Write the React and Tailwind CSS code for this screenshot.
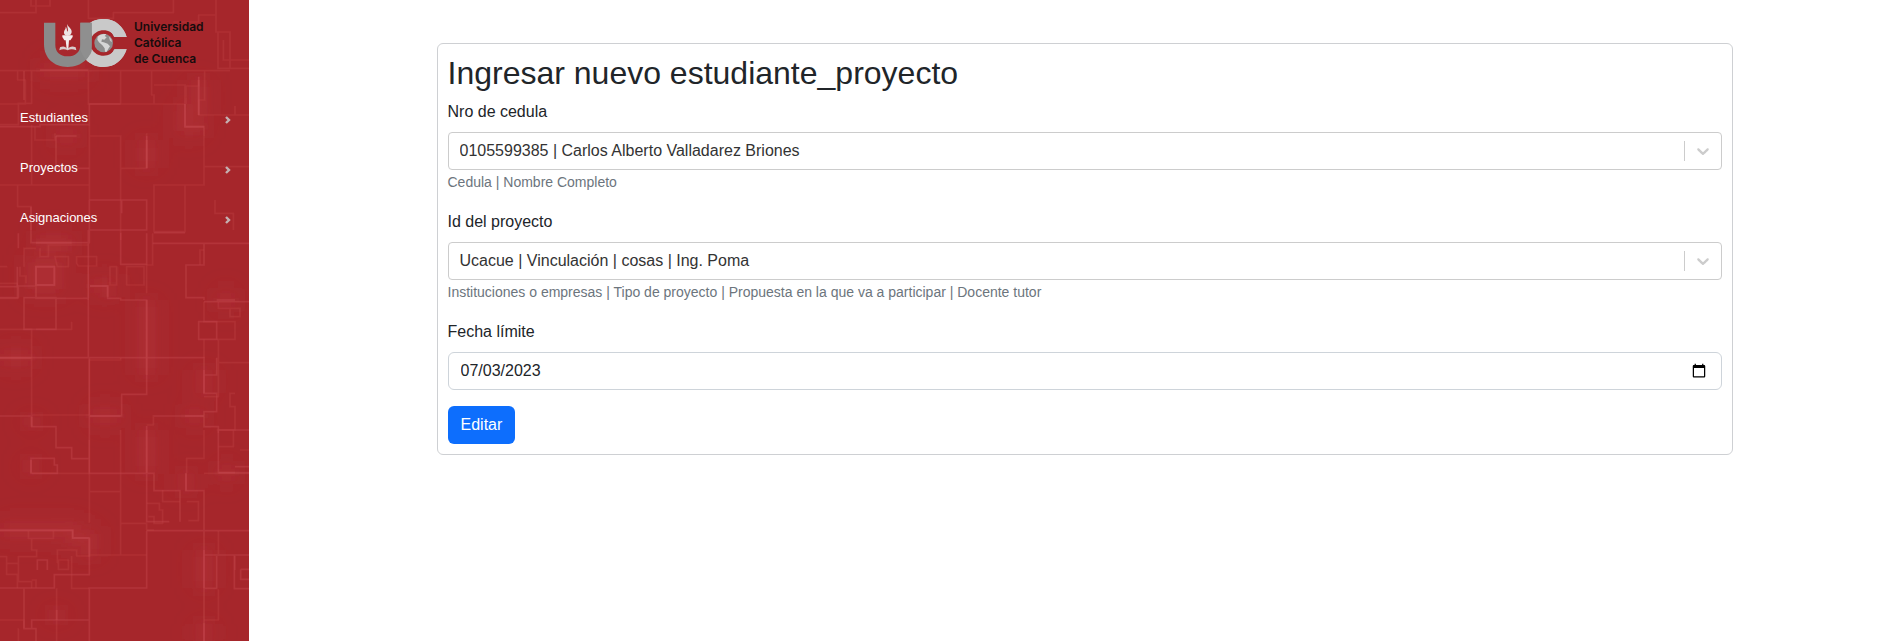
const menu = ["Estudiantes", "Proyectos", "Asignaciones"];

// Circuit-board texture behind the sidebar, grouped by line brightness.
const faintLines = `
M0 38H108V0 M93 0V18H150V0 M265 0V55H340V38H520V0 M520 66H596V45H648V0 M648 45V96H690V205H747 M654 96V205H690 M670 120V180H747
M53 213V240H76V312H0 M95 213V310H55V374H0 M265 213V312H555 M362 213V312 M455 213V285H462V312 M462 255H555V312 M596 230V258H558V312 M614 213V300H596V345H747 M705 318V345
M95 374V555 M105 380V420H165V400 M268 374V408H362V505 M268 408V600 M440 400V505H362V600 M0 555H268 M53 555V620H93V690 M462 555H555V695H462Z M555 555H612V500H747 M612 408V500 M645 600V640H700V690 M362 600V720
M0 212H690
M0 800H22M0 850H52V895H0M60 800V828H78V850 M72 800V745H108 M120 745V770H145V735H265 M165 770H205V800H172Z M230 790V770H290V798H235Z M265 800V900 M330 800H350V855H330Z M380 800H432V855H380Z M458 700V795H440V880 M600 795V750H612
M612 905V965H650 M655 905V925H720V950H690V925 M650 965H705V1018H650 M612 1018V1075 M655 1018V1190H612 M655 1088H747 M705 1180H690V1220H705V1290H650 M0 988H95V1073 M108 988H215V965
M95 1073V1245 M362 1073V1080H268V1245 M95 1245H268 M0 1075H95 M460 1245V1275H440 M268 1320V1568 M268 1475H362V1570H440 M362 1420V1665H268 M362 1290V1420 M612 1290V1375H560V1420 M720 1350H747 M612 1420H747 M655 1592V1662 M655 1768V1860H612
M95 1420H268 M85 1592V1615H160V1592 M95 1615V1650H110V1670H55V1690H20V1670H0 M20 1690V1723H52V1765 M55 1670V1745H95V1765 M95 1740H108V1765 M172 1690V1650H230V1668H268 M205 1680V1708H175V1680Z M215 1668V1765H268 M440 1665H268 M0 1860H72V1885 M55 1885V1923 M170 1765V1923
M440 1510H478V1530H488V1570H462V1550H445 M488 1470V1505H540 M560 1505H595V1562H565 M462 1590H440V1570 M655 1290V1300M700 1290V1340H655 M705 1710V1668`;

const midLines = `
M0 380H120V374H268V312H362 M72 213V300 M555 312V380H612V408 M596 230V345 M168 408V505H268 M440 408V505 M268 600H440V690H265 M93 620V728H268V600 M365 600V640 M462 698H555
M55 745V700 M52 800V860H0 M0 893H55V858H108V895H265 M108 800H163V855H108Z M72 893H168V988H72Z M265 690V1075 M270 858H323V895H362V900H440V1125 M362 698V793H440V700 M458 730H747 M612 730V795H558V893H612V900 M612 905H747 M596 965H650V1018H596Z
M0 1073H612V1180H650V1235H612V1280H655V1290H747 M650 1073V1125H612 M440 1125V1183H365V1248H268V1075 M268 1248V1420 M0 1248H95V1280H168V1343H215V1376H268 M462 1248H612 M440 1278V1565H508 M268 1420H462V1472H540V1565 M558 1420V1472H612V1923 M93 1375H163V1395H172V1420H93Z
M268 1290V1420H440 M655 1290V1418H747 M705 1400H747 M440 1592H747 M612 1665H747 M703 1665V1766H747 M722 1708H747 M722 1708V1738H747 M612 1765H650V1668 M440 1592V1764H268V1923 M0 1764H163V1724H268V1614 M72 1764V1886H108V1923 M95 1886V1860H268 M112 1710V1680H142V1710 M0 1592H218V1614H268`;

const glowLines = `
M0 1590H218V1614H268V1670 M108 728H215 M440 900V1125 M555 312V380H612 M0 1073H95 M170 1830V1860 M612 1650V1765 M558 1420V1472 M440 1290V1420 M612 1110V1180 M440 420V505 M95 1250V1280 M268 1248H362 M555 1248H612 M108 800H163V855H108Z M270 858H323V890 M650 900H705 M612 1870V1923 M120 210H265 M596 240V345 M168 408H230 M655 1418H705 M93 1380V1418`;

function CircuitTexture() {
  return (
    <svg
      aria-hidden="true"
      className="absolute inset-0 -z-10 h-full w-full"
      viewBox="0 0 747 1923"
      preserveAspectRatio="xMinYMin slice"
      fill="none"
    >
      <defs>
        <filter id="haze" x="-20%" y="-20%" width="140%" height="140%">
          <feGaussianBlur stdDeviation="32" />
        </filter>
        <filter id="soft" x="-10%" y="-10%" width="120%" height="120%">
          <feGaussianBlur stdDeviation="16" />
        </filter>
        <filter id="edge">
          <feGaussianBlur stdDeviation="1.3" />
        </filter>
      </defs>
      <path d={glowLines} stroke="#c0484d" strokeOpacity=".16" strokeWidth="70" filter="url(#haze)" />
      <path d={glowLines} stroke="#cf4a50" strokeOpacity=".14" strokeWidth="26" filter="url(#soft)" />
      <g filter="url(#edge)">
        <path d={faintLines} stroke="#c4484d" strokeOpacity=".28" strokeWidth="5" />
        <path d={midLines} stroke="#c4484d" strokeOpacity=".42" strokeWidth="5" />
        <path d={glowLines} stroke="#c84a50" strokeOpacity=".32" strokeWidth="6" />
      </g>
    </svg>
  );
}

function Logo() {
  return (
    <a href="#inicio" className="flex items-center gap-[7px] pt-[19px] pl-11 text-[#170c0d]">
      <svg width="83" height="48" viewBox="0 0 249 144" aria-hidden="true">
        <path d="M248 54C237 21 212 0 179 0C162 0 149 4 139 11V45C147 33 160 27 175 27C191 27 204 37 210 54Z" fill="#c9c9c9" />
        <path d="M248 91C237 123 212 144 179 144C158 144 140 136 126 122C134 114 140 106 143 96C150 109 162 117 177 117C192 117 204 107 210 91Z" fill="#c9c9c9" />
        <path d="M139 11C160 -4 200 -5 222 14C236 26 244 38 248 54H213C206 41 194 34 179 34C163 34 150 42 143 55Z" fill="#c9c9c9" />
        <path d="M143 89C150 102 163 110 179 110C194 110 206 103 213 91H248C238 123 212 144 179 144C158 144 140 136 126 122Z" fill="#c9c9c9" />
        <path d="M0 11H34V78C34 99 48 112 70 112C94 112 109 99 109 77V11H143V76C143 117 113 144 71 144C29 144 0 117 0 76Z" fill="#8a8a8a" />
        <path d="M143 11V96C140 106 134 114 126 122C119 114 112 103 109 91V11Z" fill="#8f8f8f" />
        <circle cx="179" cy="72" r="35" fill="#a7262b" />
        <circle cx="179" cy="72" r="28" fill="#8d8d8d" />
        <path d="M161 53C167 46 178 44 187 46L182 51L188 55L181 62L174 61L172 68L179 70L191 74L198 82L193 89L188 98H183L182 88L175 79L165 70L160 62Z" fill="#d6d6d6" />
        <path d="M194 52L202 60L204 70L198 65Z" fill="#c5c5c5" />
        <path d="M70 14C70 24 85 27 83 40C81 48 77 50 70 50C62 49 58 43 61 35C63 30 66 29 65 23C70 28 68 34 70 38C75 32 68 24 70 14Z" fill="#ece4e4" />
        <path d="M55 49H86V54L79 64H75L73 90H68L65 64H61L55 54Z" fill="#f3eded" />
        <path d="M48 85Q60 79 68 87L70 89L73 87Q82 79 95 85L97 94Q82 88 71 94Q59 88 46 94Z" fill="#d8cccc" />
      </svg>
      <span className="font-[Inter,sans-serif] text-[12px] leading-4 font-semibold">
        Universidad
        <br />
        Católica
        <br />
        de Cuenca
      </span>
    </a>
  );
}

function Sidebar() {
  return (
    <aside className="relative isolate w-[249px] shrink-0 overflow-hidden bg-[#a6262b]">
      <CircuitTexture />
      <Logo />
      <nav className="mt-[26px]">
        <ul>
          {menu.map((item) => (
            <li key={item}>
              <button type="button" className="flex h-[50px] w-full items-center justify-between pr-[18px] pl-5 text-[13px] text-white">
                {item}
                <svg width="6" height="8" viewBox="0 0 6 8" fill="none" className="mt-[3px]" aria-hidden="true">
                  <path d="M1 1L4 4L1 7" stroke="#c4b0b1" strokeWidth="2.4" />
                </svg>
              </button>
            </li>
          ))}
        </ul>
      </nav>
    </aside>
  );
}

function SelectField({ id, label, value, hint }) {
  return (
    <div className="mb-4">
      <label htmlFor={id} className="mb-2 block">{label}</label>
      <div className="relative">
        <select
          id={id}
          aria-describedby={`${id}-hint`}
          defaultValue={value}
          className="block h-[38px] w-full appearance-none rounded-sm border border-[#ccc] bg-white pr-12 pl-[11px] text-[#333]"
        >
          <option>{value}</option>
        </select>
        <span className="pointer-events-none absolute inset-y-0 right-0 flex items-center pr-[9px]">
          <span className="h-5 w-px bg-[#ccc]" />
          <svg className="ml-2" width="20" height="20" viewBox="0 0 20 20" fill="#ccc" aria-hidden="true">
            <path d="M4.516 7.548c0.436-0.446 1.043-0.481 1.576 0l3.908 3.747 3.908-3.747c0.533-0.481 1.141-0.446 1.574 0 0.436 0.445 0.408 1.197 0 1.615-0.406 0.418-4.695 4.502-4.695 4.502-0.217 0.223-0.502 0.335-0.787 0.335s-0.57-0.112-0.789-0.335c0 0-4.287-4.084-4.695-4.502s-0.436-1.17 0-1.615z" />
          </svg>
        </span>
      </div>
      <p id={`${id}-hint`} className="text-sm leading-6 text-[#6c757d]">{hint}</p>
    </div>
  );
}

export default function App() {
  return (
    <div className="flex min-h-screen bg-white font-['Liberation_Sans',Arial,sans-serif] text-base text-[#212529]">
      <Sidebar />
      <main className="min-w-0 flex-1 pt-[43px] pl-[30px]">
        <form
          onSubmit={(e) => e.preventDefault()}
          className="mx-auto max-w-[1296px] rounded-md border border-[#ced0d3] p-[10px]"
        >
          <h2 className="mb-2 text-[32px] leading-[38px]">Ingresar nuevo estudiante_proyecto</h2>
          <SelectField
            id="cedula"
            label="Nro de cedula"
            value="0105599385 | Carlos Alberto Valladarez Briones"
            hint="Cedula | Nombre Completo"
          />
          <SelectField
            id="proyecto"
            label="Id del proyecto"
            value="Ucacue | Vinculación | cosas | Ing. Poma"
            hint="Instituciones o empresas | Tipo de proyecto | Propuesta en la que va a participar | Docente tutor"
          />
          <div className="mb-4">
            <label htmlFor="fecha" className="mb-2 block">Fecha límite</label>
            <input
              id="fecha"
              type="date"
              defaultValue="2023-07-03"
              className="block h-[38px] w-full rounded-md border border-[#ced4da] bg-white px-3 [&::-webkit-datetime-edit-day-field]:p-0 [&::-webkit-datetime-edit-month-field]:p-0 [&::-webkit-datetime-edit-year-field]:p-0"
            />
          </div>
          <button type="submit" className="block h-[38px] rounded-md bg-[#0d6efd] px-[13px] text-white">
            Editar
          </button>
        </form>
      </main>
    </div>
  );
}
